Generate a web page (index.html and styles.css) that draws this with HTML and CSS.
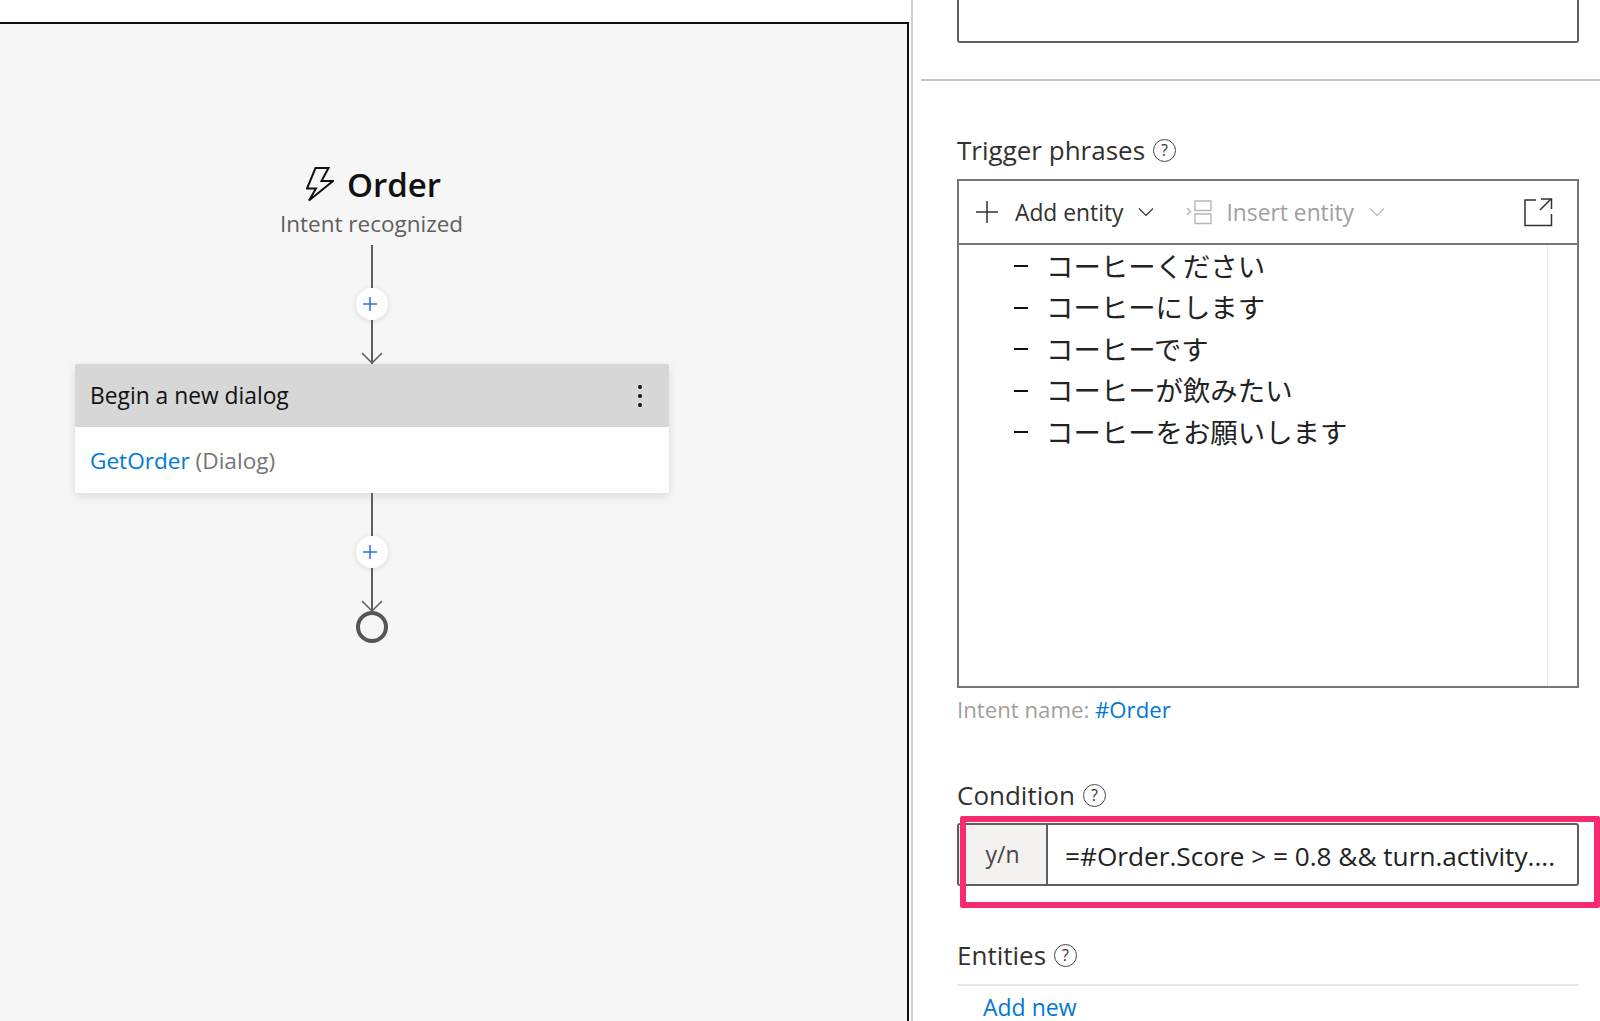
FILE: index.html
```html
<!DOCTYPE html>
<html lang="en">
<head>
    <meta charset="UTF-8">
    <title>Order trigger</title>
    <link rel="stylesheet" href="styles.css">
</head>
<body>
    <div class="page">
        <!-- Flow canvas -->
        <main class="canvas">
            <div class="flow">
                <div class="trigger-title">
                    <svg class="bolt" width="28" height="35" viewBox="0 0 28 35"><path d="M9.500 1H22.500L15.500 14H27L3 33.500L10 21.500H1z" fill="none" stroke="#111" stroke-width="2" stroke-linejoin="miter"/></svg>
                    <span>Order</span>
                </div>
                <div class="trigger-sub">Intent recognized</div>

                <div class="line line-top"></div>
                <button class="add-btn"><svg width="16" height="16" viewBox="0 0 16 16"><path d="M8 1v14M1 8h14" stroke="#2b6fe0" stroke-width="1.5"/></svg></button>
                <div class="line line-arrow">
                    <svg class="arrow" width="22" height="12" viewBox="0 0 22 12"><path d="M1 1l10 10L21 1" fill="none" stroke="#605e5c" stroke-width="1.5"/></svg>
                </div>

                <div class="card">
                    <div class="card-head">
                        <span>Begin a new dialog</span>
                        <span class="dots"><i></i><i></i><i></i></span>
                    </div>
                    <div class="card-body"><a class="link">GetOrder</a> <span class="card-type">(Dialog)</span></div>
                </div>

                <div class="line line-top"></div>
                <button class="add-btn"><svg width="16" height="16" viewBox="0 0 16 16"><path d="M8 1v14M1 8h14" stroke="#2b6fe0" stroke-width="1.5"/></svg></button>
                <div class="line line-arrow line-end">
                    <svg class="arrow" width="22" height="12" viewBox="0 0 22 12"><path d="M1 1l10 10L21 1" fill="none" stroke="#605e5c" stroke-width="1.5"/></svg>
                </div>
                <div class="end-node"></div>
            </div>
        </main>

        <!-- Properties panel -->
        <aside class="panel">
            <div class="text-box"></div>
            <hr class="panel-rule">

            <div class="label label-trigger">Trigger phrases <span class="help">?</span></div>
            <div class="editor">
                <div class="toolbar">
                    <svg class="tool-plus" width="24" height="24" viewBox="0 0 24 24"><path d="M12 1v22M1 12h22" stroke="#323130" stroke-width="1.5"/></svg>
                    <span class="tool-text">Add entity</span>
                    <svg class="chev" width="16" height="10" viewBox="0 0 16 10"><path d="M1 1.5l7 7 7-7" fill="none" stroke="#323130" stroke-width="1.2"/></svg>
                    <svg class="tool-insert" width="26" height="26" viewBox="0 0 26 26"><path d="M9 2h16v9.500H9zM9 15h16v9.500H9zM1 9l3.500 3.500L1 16" fill="none" stroke="#b9b7b5" stroke-width="1.400"/></svg>
                    <span class="tool-text is-off">Insert entity</span>
                    <svg class="chev" width="16" height="10" viewBox="0 0 16 10"><path d="M1 1.5l7 7 7-7" fill="none" stroke="#b9b7b5" stroke-width="1.2"/></svg>
                    <svg class="tool-open" width="30" height="30" viewBox="0 0 30 30"><path d="M13 3H2v25.500h26.500V17M17 13L28 2M18 2h10.500v10" fill="none" stroke="#323130" stroke-width="1.500"/></svg>
                </div>
                <div class="editor-body">
                    <ul class="phrases">
                        <li>コーヒーください</li>
                        <li>コーヒーにします</li>
                        <li>コーヒーです</li>
                        <li>コーヒーが飲みたい</li>
                        <li>コーヒーをお願いします</li>
                    </ul>
                    <div class="editor-scroll"></div>
                </div>
            </div>
            <div class="hint">Intent name: <a class="link">#Order</a></div>

            <div class="label label-condition">Condition <span class="help">?</span></div>
            <div class="condition">
                <div class="condition-type">y/n</div>
                <div class="condition-value">=#Order.Score &gt; = 0.8 &amp;&amp; turn.activity....</div>
                <div class="highlight"></div>
            </div>

            <div class="label label-entities">Entities <span class="help">?</span></div>
            <hr class="entities-rule">
            <a class="link add-new">Add new</a>
        </aside>
    </div>
</body>
</html>
```

FILE: styles.css
```css
/* Page frame */
html, body {
    margin: 0;
    padding: 0;
    height: 100%;
    overflow: hidden;
    background-color: #fff;
}

body {
    font-family: "Open Sans", "Noto Sans CJK JP", sans-serif;
    color: #323130;
}

.page {
    display: flex;
    height: 1021px;
}

.link {
    color: #0078d4;
}

/* Canvas */
.canvas {
    box-sizing: border-box;
    width: 909px;
    height: 999px;
    margin-top: 22px;
    background-color: #f6f6f6;
    border-top: 2px solid #111;
    border-right: 2px solid #111;
}

.flow {
    width: 594px;
    margin-left: 75px;
    display: flex;
    flex-direction: column;
    align-items: center;
    padding-top: 142px;
}

.trigger-title {
    display: flex;
    align-items: center;
    gap: 13px;
    height: 36px;
    margin-left: 3px;
    font-size: 33px;
    font-weight: 600;
    color: #111;
}

.trigger-sub {
    margin-top: 5px;
    margin-right: 1px;
    height: 38px;
    line-height: 33px;
    font-size: 22.5px;
    color: #605e5c;
}

.line {
    width: 2px;
    background-color: #605e5c;
}

.line-top {
    height: 43px;
}

.line-arrow {
    position: relative;
    height: 44px;
}

.arrow {
    position: absolute;
    left: -10px;
    bottom: 0;
}

.add-btn {
    width: 32px;
    height: 32px;
    padding: 0;
    border: none;
    border-radius: 50%;
    background-color: #fff;
    box-shadow: 0 1px 6px rgba(0, 0, 0, 0.12);
    display: flex;
    align-items: center;
    justify-content: center;
}

.add-btn svg {
    margin-left: -4px;
}

.card {
    width: 100%;
    border-radius: 2px;
    background-color: #fff;
    box-shadow: 0 3px 10px rgba(0, 0, 0, 0.12);
}

.card-head {
    display: flex;
    align-items: center;
    justify-content: space-between;
    height: 63px;
    padding: 0 27px 0 15px;
    background-color: #d7d7d7;
    border-radius: 2px 2px 0 0;
    font-size: 22.8px;
    color: #111;
}

.dots {
    display: flex;
    flex-direction: column;
    gap: 5px;
}

.dots i {
    width: 4px;
    height: 4px;
    border-radius: 50%;
    background-color: #111;
}

.card-body {
    height: 66px;
    line-height: 68px;
    padding-left: 15px;
    font-size: 22.6px;
}

.card-type {
    color: #757575;
}

.end-node {
    box-sizing: border-box;
    width: 32px;
    height: 32px;
    margin-top: -1px;
    border: 4px solid #555;
    border-radius: 50%;
}

/* Properties panel */
.panel {
    box-sizing: border-box;
    width: 689px;
    margin-left: 2px;
    padding: 0 21px 0 44px;
    border-left: 2px solid #cfcfcf;
}

.text-box {
    height: 41px;
    border: 2px solid #605e5c;
    border-top: none;
    border-radius: 0 0 3px 3px;
}

.panel-rule {
    margin: 36px -21px 0 -36px;
    border: none;
    height: 2px;
    background-color: #c8c6c4;
}

.label {
    display: flex;
    align-items: center;
    gap: 8px;
    height: 32px;
    font-size: 26px;
}

.label-trigger {
    margin-top: 53px;
}

.help {
    box-sizing: border-box;
    width: 23px;
    height: 23px;
    border: 1.5px solid #484644;
    border-radius: 50%;
    text-align: center;
    font-size: 16px;
    line-height: 20px;
}

.editor {
    box-sizing: border-box;
    height: 509px;
    margin-top: 13px;
    border: 2px solid #777;
}

.toolbar {
    display: flex;
    align-items: center;
    height: 62px;
    padding: 0 24px 0 16px;
    border-bottom: 2px solid #777;
}

.tool-text {
    font-size: 22.8px;
    line-height: 34px;
    padding-top: 2px;
    margin-left: 16px;
}

.tool-text.is-off {
    color: #a19f9d;
    margin-left: 14px;
}

.chev {
    margin: 0 0 0 15px;
}

.tool-insert {
    margin-left: 32px;
}

.tool-open {
    margin-left: auto;
}

.editor-body {
    display: flex;
    height: 441px;
}

.phrases {
    flex: 1;
    margin: -1px 0 0;
    padding: 0 0 0 55px;
    list-style: none;
}

.phrases li {
    display: flex;
    align-items: center;
    height: 41.500px;
    font-size: 27.4px;
    color: #222;
}

.phrases li::before {
    content: "";
    width: 14px;
    height: 2px;
    margin: 3px 18px 0 0;
    background-color: #111;
}

.editor-scroll {
    width: 29px;
    border-left: 1px solid #eaeaea;
}

.hint {
    height: 32px;
    line-height: 32px;
    margin-top: 6px;
    font-size: 22.2px;
    color: #a19f9d;
}

.label-condition {
    margin-top: 53px;
}

.condition {
    position: relative;
    display: flex;
    box-sizing: border-box;
    height: 63px;
    margin-top: 12px;
    border: 2px solid #605e5c;
    border-radius: 3px;
}

.condition-type {
    box-sizing: border-box;
    width: 89px;
    border-right: 2px solid #605e5c;
    background-color: #f3f2f1;
    text-align: center;
    line-height: 59px;
    font-size: 23px;
    color: #484644;
}

.condition-value {
    padding-left: 17px;
    line-height: 63px;
    font-size: 26.2px;
    white-space: nowrap;
    color: #222;
}

/* annotation drawn on top of the screenshot */
.highlight {
    position: absolute;
    left: 1px;
    top: -9px;
    width: 640px;
    height: 92px;
    box-sizing: border-box;
    border: 6px solid #f72b6e;
    border-radius: 2px;
}

.label-entities {
    margin-top: 53px;
}

.entities-rule {
    margin: 13px 0 0;
    border: none;
    height: 2px;
    background-color: #eaeaea;
}

.add-new {
    display: block;
    margin: 5px 0 0 26px;
    height: 32px;
    line-height: 32px;
    font-size: 23px;
}
```
